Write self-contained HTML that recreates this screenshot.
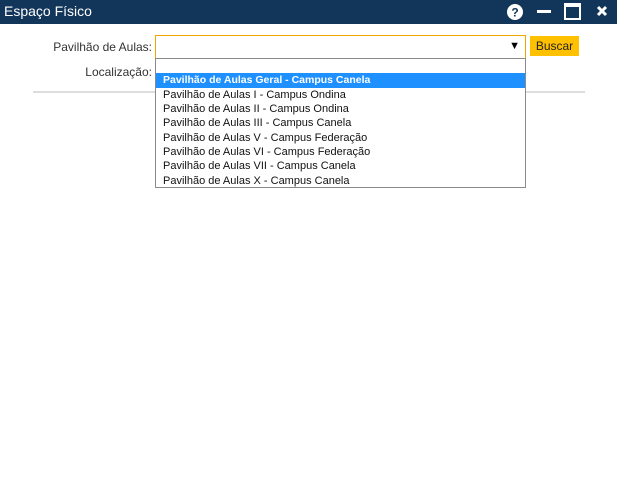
<!DOCTYPE html>
<html><head><style>
body{margin:0;width:617px;height:498px;background:#fff;font-family:"Liberation Sans",sans-serif;position:relative;overflow:hidden}
.hdr{position:absolute;left:0;top:0;width:617px;height:24px;background:#12355a;color:#fff;font-size:14px}
.hdr .t{position:absolute;left:4px;top:3px}
.lbl{position:absolute;font-size:12px;color:#333;text-align:right;width:150px;left:2px}
.sel{position:absolute;left:155px;top:35px;width:369px;height:22px;border:1px solid #f0a500;background:#fff}
.btn{position:absolute;left:530px;top:36px;width:49px;height:20px;background:#ffc000;font-size:12px;color:#222;text-align:center;line-height:21px}
.line{position:absolute;left:33px;top:91px;width:552px;height:2px;background:#ddd}
.dd{position:absolute;left:155px;top:58px;width:369px;height:128px;border:1px solid #8a8a8a;background:#fff;font-size:11px;color:#111}
.dd div{position:absolute;left:0;width:369px;height:14.5px;line-height:14.5px;padding-left:7px;box-sizing:border-box}
.dd .h{background:#1e90ff;color:#fff;font-weight:bold;font-size:10.5px}
</style></head><body>
<div class="hdr"><span class="t">Espaço Físico</span>
<svg style="position:absolute;left:506px;top:3px" width="18" height="18"><circle cx="9" cy="9" r="8" fill="#fff"/><text x="9" y="13.5" font-size="12" font-weight="bold" text-anchor="middle" fill="#12355a" font-family="Liberation Sans">?</text></svg>
<div style="position:absolute;left:537px;top:10px;width:14px;height:3px;background:#fff"></div>
<div style="position:absolute;left:564px;top:3px;width:17px;height:17px;border:2px solid #fff;box-sizing:border-box;border-top-width:4px"></div>
<svg style="position:absolute;left:596px;top:5px" width="12" height="12"><path d="M2 2L10 10M10 2L2 10" stroke="#fff" stroke-width="3"/></svg>
</div>
<div class="lbl" style="top:40px">Pavilhão de Aulas:</div>
<div class="lbl" style="top:65px">Localização:</div>
<div class="line"></div>
<div class="sel"><span style="position:absolute;right:5px;top:4px;font-size:11px">▼</span></div>
<div class="btn">Buscar</div>
<div class="dd">
<div class="h" style="top:14px">Pavilhão de Aulas Geral - Campus Canela</div>
<div style="top:28.5px">Pavilhão de Aulas I - Campus Ondina</div>
<div style="top:43px">Pavilhão de Aulas II - Campus Ondina</div>
<div style="top:57px">Pavilhão de Aulas III - Campus Canela</div>
<div style="top:71.5px">Pavilhão de Aulas V - Campus Federação</div>
<div style="top:86px">Pavilhão de Aulas VI - Campus Federação</div>
<div style="top:100px">Pavilhão de Aulas VII - Campus Canela</div>
<div style="top:114.5px">Pavilhão de Aulas X - Campus Canela</div>
</div>
</body></html>
